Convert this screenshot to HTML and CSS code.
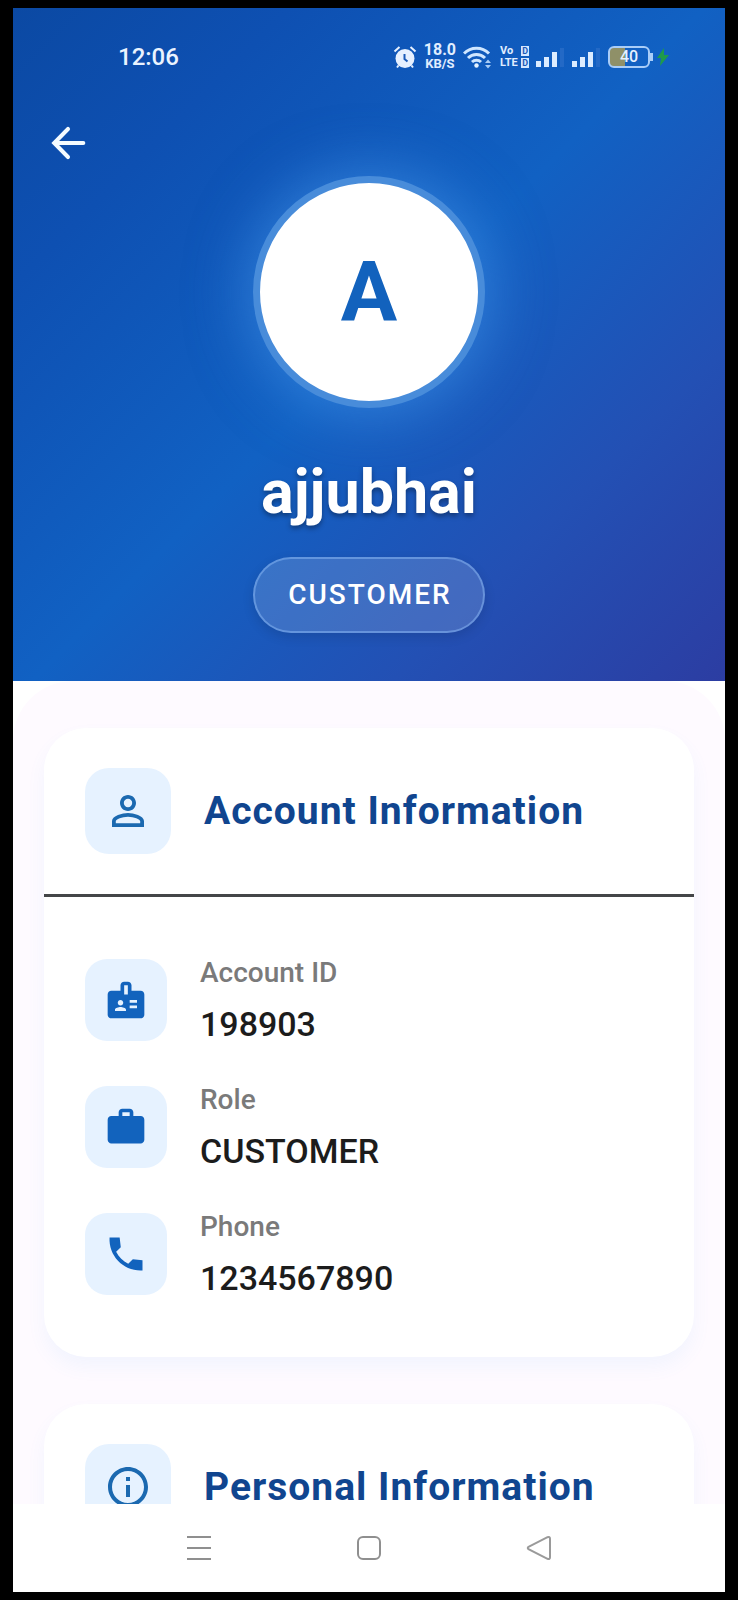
FILE: index.html
```html
<!DOCTYPE html>
<html lang="en">
<head>
<meta charset="utf-8">
<meta name="viewport" content="width=device-width, initial-scale=1">
<title>Profile</title>
<link rel="stylesheet" href="styles.css">
</head>
<body>
<div class="screen">
  <header class="hero">
    <div class="status">
      <time class="clock">12:06</time>
      <div class="indicators">
        <svg class="alarm" viewBox="0 0 24 24" width="24" height="24" aria-hidden="true"><circle cx="12" cy="13.500" r="9.500" fill="#e6f0ff"/><path d="M1.500 6.500 6.500 2M17.500 2l5 4.500M5.500 20.500 4 22.500M18.500 20.500l1.500 2" stroke="#e6f0ff" stroke-width="2" fill="none"/><path d="M11.500 9v5l3 2.500" stroke="#1a5ab8" stroke-width="2" fill="none"/></svg>
        <div class="speed"><span class="rate">18.0</span><span class="unit">KB/S</span></div>
        <svg class="wifi" viewBox="0 0 30 24" width="30" height="24" aria-hidden="true"><g fill="none" stroke="#cfe6ff" stroke-width="3"><path d="M1 8.500a17.500 17.500 0 0 1 25 0"/><path d="M5 13a12 12 0 0 1 17 0"/><path d="M9 17a6.500 6.500 0 0 1 9 0"/></g><circle cx="13.500" cy="20.500" r="2.200" fill="#e6f3ff"/><path d="M22 18l3-3.500 3 3.500zM22 20l3 3.500 3-3.500z" fill="#a9ccf5"/></svg>
        <div class="volte"><span class="volte-row">Vo<i class="sim">D</i></span><span class="volte-row">LTE<i class="sim">D</i></span></div>
        <svg class="signal" viewBox="0 0 29 22" width="29" height="22" aria-hidden="true"><path d="M0 15h5v6H0zM8 11h5v10H8zM16 6h5v15h-5z" fill="#dcecff"/><path d="M24 2h4v19h-4z" fill="#2369c6"/></svg>
        <svg class="signal" viewBox="0 0 29 22" width="29" height="22" aria-hidden="true"><path d="M0 15h5v6H0zM8 11h5v10H8zM16 6h5v15h-5z" fill="#dcecff"/><path d="M24 2h4v19h-4z" fill="#2369c6"/></svg>
        <div class="battery"><span class="level">40</span></div>
        <svg class="bolt" viewBox="0 0 12 18" width="12" height="18" aria-hidden="true"><path d="M7 0 0 10h4l-1 8 9-11H7z" fill="#1f9a4c"/></svg>
      </div>
    </div>
    <button class="back" type="button" aria-label="Back"><svg viewBox="0 0 24 24" width="46" height="46" aria-hidden="true"><path d="M20 12H5M12 4.700 4.800 12l7.200 7.300" fill="none" stroke="#f4fbff" stroke-width="2.100" stroke-linecap="round"/></svg></button>
    <div class="avatar">A</div>
    <h1 class="name">ajjubhai</h1>
    <span class="badge">CUSTOMER</span>
  </header>

  <main class="content">
    <div class="sheet">
      <section class="card">
        <div class="card-head">
          <span class="tile tile-large"><svg viewBox="0 0 24 24" width="48" height="48" aria-hidden="true"><path fill="#1b69b0" d="M12 5.900a2.100 2.100 0 1 1 0 4.200 2.100 2.100 0 0 1 0-4.200m0 9c2.970 0 6.100 1.460 6.100 2.100v1.100H5.900V17c0-.640 3.130-2.100 6.100-2.100M12 4C9.790 4 8 5.790 8 8s1.790 4 4 4 4-1.790 4-4-1.790-4-4-4m0 9c-2.670 0-8 1.340-8 4v3h16v-3c0-2.660-5.330-4-8-4"/></svg></span>
          <h2 class="card-title">Account Information</h2>
        </div>
        <dl class="rows">
          <div class="row">
            <span class="tile"><svg viewBox="0 0 24 24" width="44" height="44" aria-hidden="true"><path fill="#1263bd" d="M20 7h-5V4c0-1.100-.9-2-2-2h-2c-1.100 0-2 .9-2 2v3H4c-1.100 0-2 .9-2 2v11c0 1.100.9 2 2 2h16c1.100 0 2-.9 2-2V9c0-1.100-.9-2-2-2M9 12c.83 0 1.500.67 1.500 1.500S9.830 15 9 15s-1.500-.67-1.500-1.500S8.170 12 9 12m3 6H6v-.75c0-1 2-1.500 3-1.500s3 .5 3 1.500zm1-9h-2V4h2zm5 7.500h-4V15h4zm0-3h-4V12h4z"/></svg></span>
            <div class="field"><dt class="label">Account ID</dt><dd class="value">198903</dd></div>
          </div>
          <div class="row">
            <span class="tile"><svg viewBox="0 0 24 24" width="44" height="44" aria-hidden="true"><path fill="#1263bd" d="M20 6h-4V4c0-1.110-.89-2-2-2h-4c-1.110 0-2 .89-2 2v2H4c-1.110 0-2 .89-2 2v11c0 1.110.89 2 2 2h16c1.110 0 2-.89 2-2V8c0-1.110-.89-2-2-2m-6 0h-4V4h4z"/></svg></span>
            <div class="field"><dt class="label">Role</dt><dd class="value">CUSTOMER</dd></div>
          </div>
          <div class="row">
            <span class="tile"><svg viewBox="0 0 24 24" width="44" height="44" aria-hidden="true"><path fill="#1263bd" d="m21 15.460-5.270-.61-2.520 2.520c-2.830-1.440-5.150-3.750-6.590-6.590l2.530-2.530L8.540 3H3.030C2.450 13.180 10.820 21.550 21 20.970z"/></svg></span>
            <div class="field"><dt class="label">Phone</dt><dd class="value">1234567890</dd></div>
          </div>
        </dl>
      </section>

      <section class="card">
        <div class="card-head">
          <span class="tile tile-large"><svg viewBox="0 0 24 24" width="48" height="48" aria-hidden="true"><path fill="#1b69b0" d="M11 7h2v2h-2zm0 4h2v6h-2zm1-9C6.480 2 2 6.480 2 12s4.480 10 10 10 10-4.480 10-10S17.520 2 12 2m0 18c-4.410 0-8-3.590-8-8s3.590-8 8-8 8 3.590 8 8-3.590 8-8 8"/></svg></span>
          <h2 class="card-title">Personal Information</h2>
        </div>
      </section>
    </div>
  </main>

  <nav class="system-nav" aria-label="System">
    <button class="nav-button" type="button" aria-label="Menu"><svg viewBox="0 0 26 26" width="26" height="26" aria-hidden="true"><path d="M1 2h24M1 13h24M1 24h24" stroke="#8f8f8f" stroke-width="2"/></svg></button>
    <button class="nav-button" type="button" aria-label="Home"><svg viewBox="0 0 26 26" width="26" height="26" aria-hidden="true"><rect x="2" y="2" width="22" height="22" rx="5" fill="none" stroke="#8f8f8f" stroke-width="2"/></svg></button>
    <button class="nav-button" type="button" aria-label="Back"><svg viewBox="0 0 26 26" width="26" height="26" aria-hidden="true"><path d="M2.500 11.800 21.500 2.200q2.500-.9 2.500 1.500v18.600q0 2.400-2.500 1.500L2.500 14.200q-1.500-1.200 0-2.400z" fill="none" stroke="#9a9a9a" stroke-width="2"/></svg></button>
  </nav>
</div>
</body>
</html>
```
FILE: styles.css
```css
* {
  box-sizing: border-box;
}

body {
  margin: 0;
  background: #000;
  font-family: Roboto, "Noto Sans", sans-serif;
}

h1, h2, dl, dd {
  margin: 0;
}

button {
  padding: 0;
  border: 0;
  background: none;
}

svg {
  display: block;
}

.screen {
  display: flex;
  flex-direction: column;
  height: 100vh;
  border: solid #000;
  border-width: 8px 13px;
  background: #fff;
}

/* Hero */
.hero {
  display: flex;
  flex-direction: column;
  align-items: center;
  flex: none;
  padding-bottom: 48px;
  background: linear-gradient(135deg, #0b49a3 0%, #0e50b2 20%, #1161c3 50%, #2350b4 76%, #2c3da2 100%);
  color: #fff;
}

.status {
  display: flex;
  align-items: center;
  justify-content: space-between;
  align-self: stretch;
  height: 97px;
  padding: 0 56px 0 105px;
}

.clock {
  font-size: 24px;
  font-weight: 500;
  line-height: 30px;
  color: #eaf3ff;
}

.indicators {
  display: flex;
  align-items: center;
  gap: 7px;
}

.speed,
.volte {
  display: flex;
  flex-direction: column;
  align-items: center;
  font-weight: 700;
  color: #e0eeff;
}

.rate {
  font-size: 16px;
  line-height: 14px;
}

.unit {
  font-size: 13px;
  line-height: 13px;
}

.volte-row {
  display: flex;
  align-items: center;
  justify-content: space-between;
  gap: 1px;
  width: 29px;
  font-size: 11px;
  line-height: 12px;
}

.sim {
  padding: 0 1px;
  background: #d5e6ff;
  color: #1a5ab8;
  font-size: 9px;
  font-style: normal;
  line-height: 10px;
}

.battery {
  position: relative;
  width: 42px;
  height: 22px;
  border: 2px solid #a9cdf8;
  border-radius: 6px;
  background: linear-gradient(90deg, #8f9068 40%, transparent 40%);
  text-align: center;
}

.battery::after {
  content: "";
  position: absolute;
  top: 5px;
  right: -5px;
  width: 3px;
  height: 8px;
  background: #a9cdf8;
}

.level {
  display: block;
  font-size: 16px;
  font-weight: 500;
  line-height: 18px;
  color: #e6f0ff;
}

.back {
  align-self: flex-start;
  margin: 15px 0 10px 32px;
}

.avatar {
  display: flex;
  align-items: center;
  justify-content: center;
  width: 232px;
  height: 232px;
  border: 7px solid #488cda;
  border-radius: 50%;
  background: #fff;
  box-shadow: 0 0 56px 8px rgba(75, 155, 240, 0.5);
  color: #1262bd;
  font-size: 84px;
  font-weight: 700;
}

.name {
  margin-top: 49px;
  font-size: 61px;
  font-weight: 700;
  line-height: 70px;
  text-shadow: 0 3px 5px rgba(0, 0, 0, 0.35);
}

.badge {
  margin-top: 30px;
  padding: 0 31px 0 33px;
  border: 2px solid rgba(140, 185, 245, 0.5);
  border-radius: 38px;
  background: rgba(255, 255, 255, 0.15);
  box-shadow: 0 4px 12px rgba(0, 0, 0, 0.12);
  font-size: 28px;
  font-weight: 500;
  letter-spacing: 2px;
  line-height: 72px;
}

/* Scrolling content */
.content {
  flex: 1;
  min-height: 0;
  overflow: hidden;
}

.sheet {
  display: flex;
  flex-direction: column;
  gap: 47px;
  padding: 47px 31px;
  border-radius: 60px 60px 0 0;
  background: #fefaff;
}

.card {
  border-radius: 42px;
  background: #fff;
  box-shadow: 0 10px 18px rgba(90, 170, 245, 0.07);
}

.card-head {
  display: flex;
  align-items: center;
  gap: 33px;
  padding: 40px 41px;
}

.tile {
  display: flex;
  align-items: center;
  justify-content: center;
  flex: none;
  width: 82px;
  height: 82px;
  border-radius: 22px;
  background: #e6f2ff;
}

.tile-large {
  width: 86px;
  height: 86px;
  border-radius: 24px;
}

.card-title {
  color: #10458f;
  font-size: 39px;
  font-weight: 700;
  letter-spacing: 1px;
  line-height: 48px;
}

.rows {
  display: flex;
  flex-direction: column;
  gap: 41px;
  padding: 60px 41px;
  border-top: 3px solid #444648;
}

.row {
  display: flex;
  align-items: center;
  gap: 33px;
}

.field {
  display: flex;
  flex-direction: column;
  gap: 16px;
}

.label {
  color: #7a7a7a;
  font-size: 28px;
  font-weight: 500;
  line-height: 32px;
}

.value {
  color: #1c1c1c;
  font-size: 34px;
  font-weight: 500;
  line-height: 38px;
}

/* System navigation */
.system-nav {
  display: flex;
  align-items: center;
  justify-content: center;
  gap: 144px;
  flex: none;
  height: 88px;
  background: #fff;
}
```
